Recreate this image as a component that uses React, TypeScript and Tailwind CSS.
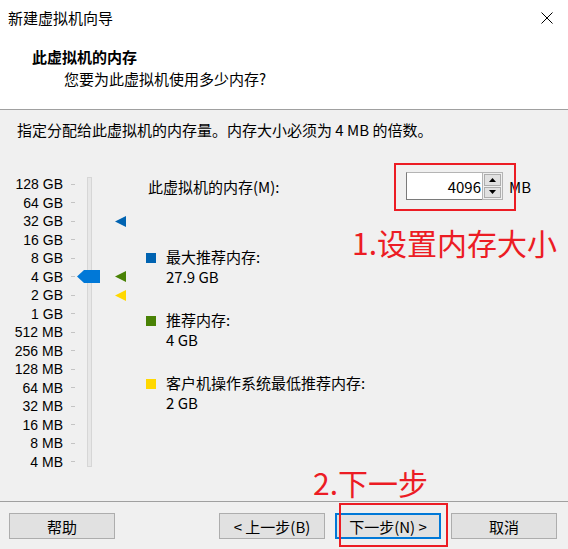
import React from 'react'

const FONT = '"Noto Sans CJK SC", "Noto Sans", sans-serif'

const LABELS = [
  '128 GB', '64 GB', '32 GB', '16 GB', '8 GB', '4 GB', '2 GB', '1 GB',
  '512 MB', '256 MB', '128 MB', '64 MB', '32 MB', '16 MB', '8 MB', '4 MB',
]

const ROW = 18.53

function Marker({ color, row }: { color: string; row: number }) {
  // centre of label row, relative to the slider box (which starts at y=172)
  const top = 3 + ROW * row + ROW / 2 - 5.5
  return (
    <svg
      className="absolute left-[40px]"
      style={{ top }}
      width="11"
      height="11"
      viewBox="0 0 11 11"
    >
      <polygon points="0,5.5 11,0 11,11" fill={color} />
    </svg>
  )
}

function LegendItem({ color, label, value }: { color: string; label: string; value: string }) {
  return (
    <div className="flex items-start">
      <div className={`mt-[6px] w-[10px] h-[10px] ${color}`} />
      <div className="ml-[10px] leading-[20px]">
        <div>{label}</div>
        <div>{value}</div>
      </div>
    </div>
  )
}

function Button({ children, primary }: { children: React.ReactNode; primary?: boolean }) {
  return (
    <button
      className={
        primary
          ? 'w-[106px] h-[26px] border-2 border-[#0078d7] bg-[#e1e1e1] text-[15px] leading-none'
          : 'w-[106px] h-[26px] border border-[#adadad] bg-[#e1e1e1] text-[15px] leading-none'
      }
    >
      {children}
    </button>
  )
}

export default function App() {
  return (
    <div
      className="relative w-[568px] h-[549px] bg-[#f0f0f0] flex flex-col overflow-hidden text-black text-[15px]"
      style={{ fontFamily: FONT }}
    >
      {/* title + header */}
      <div className="bg-white h-[110px] border-b border-[#a0a0a0]">
        <div className="h-[35px] flex items-center justify-between pl-[8px] pr-[15px]">
          <span className="leading-[20px]">新建虚拟机向导</span>
          <svg width="12" height="12" viewBox="0 0 12 12">
            <path d="M0.5 0.5 L11.5 11.5 M11.5 0.5 L0.5 11.5" stroke="#000" strokeWidth="1" />
          </svg>
        </div>
        <div className="mt-[12px] pl-[32px] font-bold leading-[20px]">此虚拟机的内存</div>
        <div className="mt-[2px] pl-[64px] leading-[20px]">您要为此虚拟机使用多少内存?</div>
      </div>

      {/* body */}
      <div className="flex-1">
        <div className="pt-[10px] pl-[17px] leading-[20px]">
          指定分配给此虚拟机的内存量。内存大小必须为 4 MB 的倍数。
        </div>

        <div className="mt-[32px] flex items-start">
          {/* scale labels + ticks */}
          <div className="w-[75px] pt-[3px] font-['Liberation_Sans',sans-serif]">
            {LABELS.map((l) => (
              <div key={l} className="flex items-center h-[18.53px]">
                <span className="flex-1 text-right text-[14px] leading-none">{l}</span>
                <span className="ml-[8px] w-[4px] h-px bg-[#c4c4c4]" />
              </div>
            ))}
          </div>

          {/* slider track */}
          <div className="relative w-[55px] h-[300px]">
            <div className="ml-[12px] mt-[5px] w-[5px] h-[290px] bg-[#e7e7e7] border border-[#d6d6d6]" />
            <svg className="absolute left-[2px] top-[98px]" width="23" height="13" viewBox="0 0 23 13">
              <polygon points="0,6.5 7,0 23,0 23,13 7,13" fill="#0078d7" />
            </svg>
            <Marker color="#0063b1" row={2} />
            <Marker color="#498205" row={5} />
            <Marker color="#ffd800" row={6} />
          </div>

          {/* right side */}
          <div className="ml-[16px] flex flex-col">
            <div className="h-[28px] flex items-center">
              <span className="ml-[2px] w-[258px] leading-none">此虚拟机的内存(M):</span>
              <div className="flex h-[28px]">
                <div className="w-[76px] h-full bg-white border border-[#7a7a7a] border-t-[#b4b4b4] border-r-0 flex items-center justify-end pr-[1px] leading-none">
                  4096
                </div>
                <div className="w-[21px] h-full flex flex-col border border-[#b4b4b4] bg-[#f0f0f0] p-px gap-px">
                  <div className="flex-1 bg-[#e1e1e1] border border-[#adadad] flex items-center justify-center">
                    <svg width="7" height="4" viewBox="0 0 7 4"><polygon points="3.5,0 7,4 0,4" fill="#000" /></svg>
                  </div>
                  <div className="flex-1 bg-[#e1e1e1] border border-[#adadad] flex items-center justify-center">
                    <svg width="7" height="4" viewBox="0 0 7 4"><polygon points="0,0 7,0 3.5,4" fill="#000" /></svg>
                  </div>
                </div>
              </div>
              <span className="ml-[6px] leading-none">MB</span>
            </div>

            <div className="mt-[47px] flex flex-col gap-[23px]">
              <LegendItem color="bg-[#0063b1]" label="最大推荐内存:" value="27.9 GB" />
              <LegendItem color="bg-[#498205]" label="推荐内存:" value="4 GB" />
              <LegendItem color="bg-[#ffd800]" label="客户机操作系统最低推荐内存:" value="2 GB" />
            </div>
          </div>
        </div>
      </div>

      {/* footer */}
      <div className="h-[48px] border-t border-[#a0a0a0] pt-[11px] pl-[9px] pr-[11px] flex items-start">
        <Button>帮助</Button>
        <div className="flex-1" />
        <div className="flex gap-[10px]">
          <Button>&lt; 上一步(B)</Button>
          <Button primary>下一步(N) &gt;</Button>
          <Button>取消</Button>
        </div>
      </div>

      {/* red annotations */}
      <div className="absolute left-[394px] top-[163px] w-[122px] h-[48px] border-2 border-[#ec1c24]" />
      <div className="absolute left-[352px] top-[227px] text-[30px] leading-[30px] text-[#ec1c24]">1.设置内存大小</div>
      <div className="absolute left-[313px] top-[467px] text-[30px] leading-[30px] text-[#ec1c24]">2.下一步</div>
      <div className="absolute left-[339px] top-[503px] w-[109px] h-[44px] border-2 border-[#ec1c24]" />
    </div>
  )
}
